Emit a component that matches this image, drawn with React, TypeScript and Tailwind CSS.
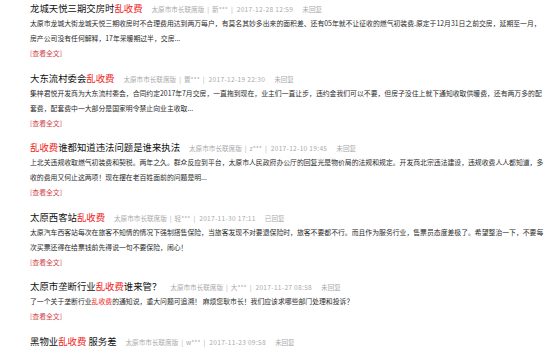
type Part = string | { red: string };

type Post = {
  title: Part[];
  author: string;
  time: string;
  status: string;
  lines: Part[][];
};

const posts: Post[] = [
  {
    title: ["龙城天悦三期交房时", { red: "乱收费" }],
    author: "新***",
    time: "2017-12-28 12:59",
    status: "未回复",
    lines: [
      ["太原市龙城大街龙城天悦三期收房时不合理费用达到两万每户，有莫名其妙多出来的面积差、还有05年就不让征收的燃气初装费.原定于12月31日之前交房，延期至一月，"],
      ["房产公司没有任何解释，17年采暖期过半，交房..."],
    ],
  },
  {
    title: ["大东流村委会", { red: "乱收费" }],
    author: "置***",
    time: "2017-12-19 22:30",
    status: "未回复",
    lines: [
      ["集梓君悦开发商为大东流村委会，合同约定2017年7月交房，一直拖到现在，业主们一直让步，违约金我们可以不要，但房子没住上就下通知收取供暖费，还有两万多的配"],
      ["套费，配套费中一大部分是国家明令禁止向业主收取..."],
    ],
  },
  {
    title: [{ red: "乱收费" }, "谁都知道违法问题是谁来执法"],
    author: "z***",
    time: "2017-12-10 19:45",
    status: "未回复",
    lines: [
      ["上北关违规收取燃气初装费和契税。两年之久。群众反应到平台，太原市人民政府办公厅的回复光是物价局的法规和规定。开发商北宗违法建设，违规收费人人都知道，多"],
      ["收的费用又何止这两项！现在摆在老百姓面前的问题是明..."],
    ],
  },
  {
    title: ["太原西客站", { red: "乱收费" }],
    author: "轻***",
    time: "2017-11-30 17:11",
    status: "已回复",
    lines: [
      ["太原汽车西客站每次在旅客不知情的情况下强制搭售保险，当旅客发现不对要退保险时，旅客不要都不行。而且作为服务行业，售票员态度差极了。希望整治一下，不要每"],
      ["次买票还得在给票钱前先得说一句不要保险，闹心！"],
    ],
  },
  {
    title: ["太原市垄断行业", { red: "乱收费" }, "谁来管？"],
    author: "大***",
    time: "2017-11-27 08:58",
    status: "未回复",
    lines: [
      ["了一个关于垄断行业", { red: "乱收费" }, "的通知说，重大问题可追溯！ 麻烦您耿市长！我们应该求哪些部门处理和投诉？"],
    ],
  },
  {
    title: ["黑物业", { red: "乱收费" }, " 服务差"],
    author: "w***",
    time: "2017-11-23 09:58",
    status: "未回复",
    lines: [],
  },
];

function Parts({ parts }: { parts: Part[] }) {
  return (
    <>
      {parts.map((p, i) =>
        typeof p === "string" ? (
          <span key={i}>{p}</span>
        ) : (
          <span key={i} className="text-[#f01d1d]">
            {p.red}
          </span>
        )
      )}
    </>
  );
}

export default function App() {
  return (
    <div className="w-[553px] h-[347px] overflow-hidden bg-white pl-[30px] font-['Noto_Sans_CJK_SC',sans-serif]">
      {posts.map((post, i) => (
        <div key={i} className="mb-[9.5px]">
          <div className="flex items-baseline h-4 whitespace-nowrap">
            <span className="text-[9.4px] leading-4 text-[#111]">
              <Parts parts={post.title} />
            </span>
            <span className="ml-[9px] text-[6.6px] text-[#aaa] flex items-baseline">
              <span>太原市市长联席版</span>
              <span className="mx-[3px]">|</span>
              <span>{post.author}</span>
              <span className="mx-[3px]">|</span>
              <span className="ml-px tracking-[0.3px]">{post.time}</span>
              <span className="ml-[9px]">{post.status}</span>
            </span>
          </div>
          {post.lines.map((line, j) => (
            <p key={j} className="text-[6.85px] leading-[15px] text-[#2b2b2b] whitespace-nowrap">
              <Parts parts={line} />
            </p>
          ))}
          {post.lines.length > 0 && (
            <p className="text-[6.85px] leading-[14px] text-[#d2454c]">[查看全文]</p>
          )}
        </div>
      ))}
    </div>
  );
}
